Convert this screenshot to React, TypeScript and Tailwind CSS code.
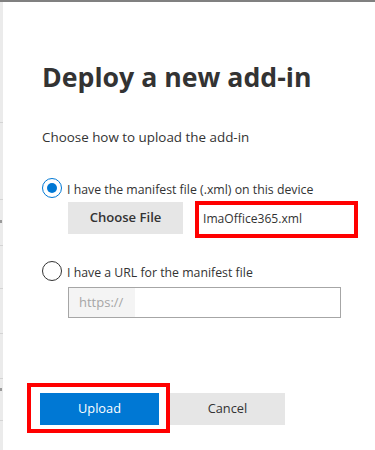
import React from "react";

function StripLine() {
  return <div className="h-px bg-[#d4d4d4]" />;
}

export default function App() {
  const font = { fontFamily: '"Open Sans", "Noto Sans", sans-serif' };
  return (
    <div className="w-[375px] h-[450px] bg-white overflow-hidden text-[#333]" style={font}>
      <div className="h-[2px] bg-[#808080]" />
      <div className="flex h-[448px]">
        <div className="w-[3px] bg-[#ebebeb] flex flex-col shrink-0">
          <div className="h-[120px]" />
          <StripLine />
          <div className="h-[76px]" />
          <StripLine />
          <div className="h-[20px]" />
          <div className="h-[3px] w-[2px] bg-[#9a9a9a]" />
          <div className="h-[22px]" />
          <StripLine />
          <div className="h-[42px]" />
          <StripLine />
          <div className="h-[44px]" />
          <StripLine />
          <div className="h-[44px]" />
          <StripLine />
          <div className="h-[9px]" />
          <div className="h-[3px] w-[2px] bg-[#9a9a9a]" />
          <div className="h-[29px]" />
          <StripLine />
        </div>
        <div className="flex-1 pl-[39px] pt-[57px]">
          <h1 className="text-[26.7px] font-bold leading-[36px] text-[#333]">Deploy a new add-in</h1>
          <p className="mt-[32px] text-[13.4px] leading-[20px]">Choose how to upload the add-in</p>

          <div className="mt-[31px] flex items-start gap-[5px]">
            <span className="w-[20px] h-[20px] rounded-full border border-[#0078d4] flex items-center justify-center shrink-0">
              <span className="w-[10px] h-[10px] rounded-full bg-[#0078d4]" />
            </span>
            <span className="pt-[2px] text-[12.3px] leading-[20px]">I have the manifest file (.xml) on this device</span>
          </div>
          <div className="mt-[1px] ml-[26px] flex items-start gap-[12px]">
            <div className="mt-[1px] w-[115px] h-[32px] bg-[#e6e6e6] flex items-center justify-center text-[13.1px] font-semibold">
              Choose File
            </div>
            <div className="w-[163px] h-[37px] border-[4px] border-[#ff0000] flex items-center pl-[4px] text-[12.1px]">
              ImaOffice365.xml
            </div>
          </div>

          <div className="mt-[23px] flex items-start gap-[5px]">
            <span className="w-[20px] h-[20px] rounded-full border border-[#333] shrink-0" />
            <span className="pt-[2px] text-[12.3px] leading-[20px]">I have a URL for the manifest file</span>
          </div>
          <div className="mt-[4px] ml-[26px] w-[273px] h-[31px] border border-[#a6a6a6] flex">
            <div className="w-[66px] bg-[#f4f4f4] flex items-center pl-[10px] text-[13px] text-[#a6a6a6]">https://</div>
            <div className="flex-1" />
          </div>

          <div className="mt-[65px] -ml-[15px] flex items-start">
            <div className="w-[143px] h-[50px] border-[4px] border-[#ff0000] pl-[9px] pt-[6px]">
              <div className="w-[119px] h-[32px] bg-[#0078d4] text-white flex items-center justify-center text-[12.8px]">
                Upload
              </div>
            </div>
            <div className="mt-[10px] w-[115px] h-[32px] bg-[#e6e6e6] flex items-center justify-center text-[12.8px]">
              Cancel
            </div>
          </div>
        </div>
      </div>
    </div>
  );
}
